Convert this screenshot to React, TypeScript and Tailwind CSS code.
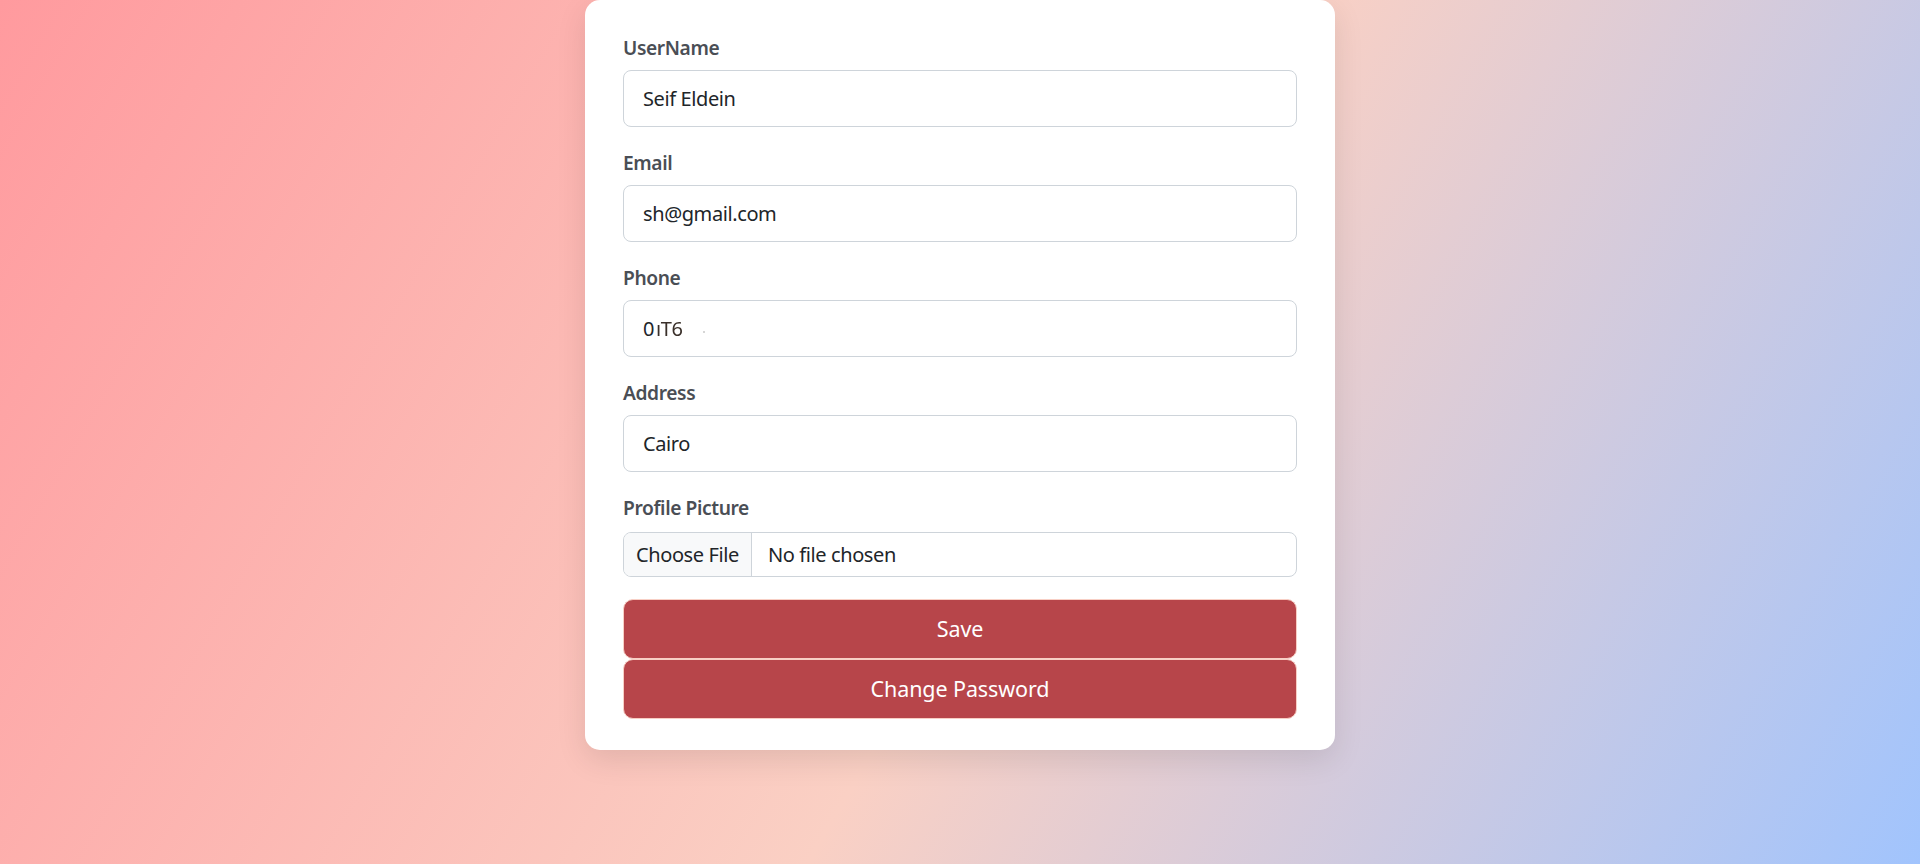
import React from "react";

const font = { fontFamily: '"Noto Sans", "Open Sans", sans-serif' };

function Label({ children, mb = "mb-[8px]" }: { children: React.ReactNode; mb?: string }) {
  return (
    <div className={`h-[29px] leading-[29px] ${mb} text-[19.2px] font-semibold text-[#4a4e55] tracking-[-0.4px]`}>
      {children}
    </div>
  );
}

function Field({ label, value }: { label: string; value: React.ReactNode }) {
  return (
    <div className="mb-[21px]">
      <Label>{label}</Label>
      <div className="h-[57px] flex items-center px-[19px] border border-[#ced4da] rounded-[8px] bg-white text-[20px] text-[#212529] tracking-[-0.4px]">
        {value}
      </div>
    </div>
  );
}

export default function App() {
  return (
    <div
      className="min-h-screen w-full flex justify-center bg-[linear-gradient(120deg,#ff9a9e_0%,#fad0c4_54%,#a1c4fd_100%)]"
      style={font}
    >
      <div className="w-[750px] h-[750px] bg-white rounded-[15px] shadow-[0_10px_30px_rgba(0,0,0,0.10)] px-[38px] pt-[33px]">
        <Field label="UserName" value="Seif Eldein" />
        <Field label="Email" value="sh@gmail.com" />
        <Field
          label="Phone"
          value={
            <span className="flex items-center">
              <span>0</span>
              <span className="ml-[2px] blur-[0.7px] text-[#3a302a]">ıT6</span>
              <span className="ml-[20px] w-[2px] h-[2px] rounded-full bg-[#c8c8c8] mt-[6px]"></span>
            </span>
          }
        />
        <Field label="Address" value="Cairo" />
        <div className="mb-[22px]">
          <Label mb="mb-[10px]">Profile Picture</Label>
          <div className="h-[45px] flex items-stretch border border-[#ced4da] rounded-[8px] overflow-hidden text-[20px] text-[#212529] tracking-[-0.4px]">
            <div className="w-[128px] flex items-center pl-[12px] bg-[#f8f9fa] border-r border-[#ced4da]">Choose File</div>
            <div className="flex items-center pl-[16px]">No file chosen</div>
          </div>
        </div>
        <div className="flex flex-col">
          <button className="h-[60px] w-full rounded-[10px] border border-[#f8cfc5] bg-[#b7454a] text-white text-[21.5px] tracking-[-0.1px]">
            Save
          </button>
          <button className="h-[60px] w-full rounded-[10px] border border-[#f8cfc5] bg-[#b7454a] text-white text-[21.5px] tracking-[-0.1px]">
            Change Password
          </button>
        </div>
      </div>
    </div>
  );
}
